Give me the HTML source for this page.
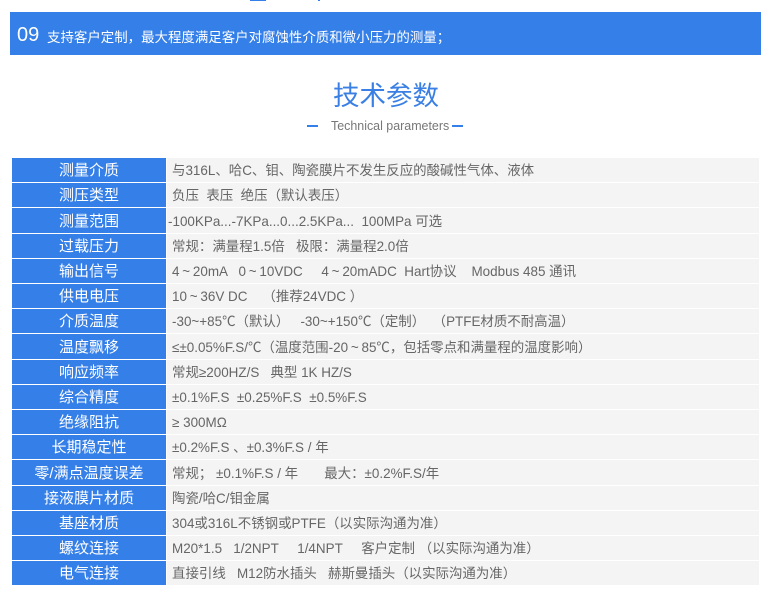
<!DOCTYPE html>
<html lang="zh"><head><meta charset="utf-8"><style>
html,body{margin:0;padding:0;background:#fff;width:773px;height:600px;overflow:hidden}
body{font-family:"Liberation Sans","Noto Sans CJK SC",sans-serif;position:relative}
.a{position:absolute;white-space:pre}
.b{position:absolute;background:#357fe8}
.l{position:absolute;left:12px;width:154px;background:#357fe8;color:#fff;font-size:15px;text-align:center;white-space:pre;box-sizing:border-box;padding-top:1px}
.v{position:absolute;left:167px;width:592px;background:#f4f4f4;color:#666;font-size:13.45px;white-space:pre;box-sizing:border-box;padding-left:5px;padding-top:1px}
.t{display:inline-block;width:13.45px;text-align:center;line-height:1}
</style></head><body>
<div class="b" style="left:250px;top:0;width:16px;height:1px"></div>
<div class="b" style="left:318px;top:0;width:2px;height:1px"></div>
<div class="b" style="left:10px;top:12px;width:751px;height:43px"></div>
<div class="a" style="left:17px;top:22px;font-size:20px;line-height:26px;color:#fff">09</div>
<div class="a" style="left:47px;top:28px;font-size:13.45px;line-height:20px;color:#fff">支持客户定制，最大程度满足客户对腐蚀性介质和微小压力的测量；</div>
<div class="a" style="left:333px;top:77px;font-size:26.5px;line-height:38px;color:#3a80e4">技术参数</div>
<div class="b" style="left:307px;top:125px;width:11px;height:2px"></div>
<div class="a" style="left:331px;top:118px;font-size:12.45px;line-height:16px;color:#777">Technical parameters</div>
<div class="b" style="left:452px;top:125px;width:11px;height:2px"></div>

<div class="l" style="top:158px;height:24px;line-height:24px">测量介质</div><div class="v" style="top:158px;height:24px;line-height:24px">与316L、哈C、钼、陶瓷膜片不发生反应的酸碱性气体、液体</div>
<div class="l" style="top:183px;height:24px;line-height:24px">测压类型</div><div class="v" style="top:183px;height:24px;line-height:24px">负压  表压  绝压（默认表压）</div>
<div class="l" style="top:208px;height:25px;line-height:25px">测量范围</div><div class="v" style="top:208px;height:25px;line-height:25px;padding-left:1px">-100KPa...-7KPa...0...2.5KPa...  100MPa 可选</div>
<div class="l" style="top:234px;height:24px;line-height:24px">过载压力</div><div class="v" style="top:234px;height:24px;line-height:24px">常规：满量程1.5倍   极限：满量程2.0倍</div>
<div class="l" style="top:259px;height:24px;line-height:24px">输出信号</div><div class="v" style="top:259px;height:24px;line-height:24px">4<span class="t">~</span>20mA   0<span class="t">~</span>10VDC     4<span class="t">~</span>20mADC  Hart协议    Modbus 485 通讯</div>
<div class="l" style="top:284px;height:24px;line-height:24px">供电电压</div><div class="v" style="top:284px;height:24px;line-height:24px">10<span class="t">~</span>36V DC    （推荐24VDC ）</div>
<div class="l" style="top:309px;height:24px;line-height:24px">介质温度</div><div class="v" style="top:309px;height:24px;line-height:24px">-30~+85℃（默认）   -30~+150℃（定制）  （PTFE材质不耐高温）</div>
<div class="l" style="top:334px;height:25px;line-height:25px">温度飘移</div><div class="v" style="top:334px;height:25px;line-height:25px">≤±0.05%F.S/℃（温度范围-20<span class="t">~</span>85℃，包括零点和满量程的温度影响）</div>
<div class="l" style="top:360px;height:24px;line-height:24px">响应频率</div><div class="v" style="top:360px;height:24px;line-height:24px">常规≥200HZ/S   典型 1K HZ/S</div>
<div class="l" style="top:385px;height:24px;line-height:24px">综合精度</div><div class="v" style="top:385px;height:24px;line-height:24px">±0.1%F.S  ±0.25%F.S  ±0.5%F.S</div>
<div class="l" style="top:410px;height:24px;line-height:24px">绝缘阻抗</div><div class="v" style="top:410px;height:24px;line-height:24px">≥ 300MΩ</div>
<div class="l" style="top:435px;height:24px;line-height:24px">长期稳定性</div><div class="v" style="top:435px;height:24px;line-height:24px">±0.2%F.S 、±0.3%F.S / 年</div>
<div class="l" style="top:460px;height:25px;line-height:25px">零/满点温度误差</div><div class="v" style="top:460px;height:25px;line-height:25px">常规； ±0.1%F.S / 年       最大：±0.2%F.S/年</div>
<div class="l" style="top:486px;height:24px;line-height:24px">接液膜片材质</div><div class="v" style="top:486px;height:24px;line-height:24px">陶瓷/哈C/钼金属</div>
<div class="l" style="top:511px;height:24px;line-height:24px">基座材质</div><div class="v" style="top:511px;height:24px;line-height:24px">304或316L不锈钢或PTFE（以实际沟通为准）</div>
<div class="l" style="top:536px;height:24px;line-height:24px">螺纹连接</div><div class="v" style="top:536px;height:24px;line-height:24px">M20*1.5   1/2NPT     1/4NPT     客户定制 （以实际沟通为准）</div>
<div class="l" style="top:561px;height:24px;line-height:24px">电气连接</div><div class="v" style="top:561px;height:24px;line-height:24px">直接引线   M12防水插头   赫斯曼插头（以实际沟通为准）</div>
</body></html>
